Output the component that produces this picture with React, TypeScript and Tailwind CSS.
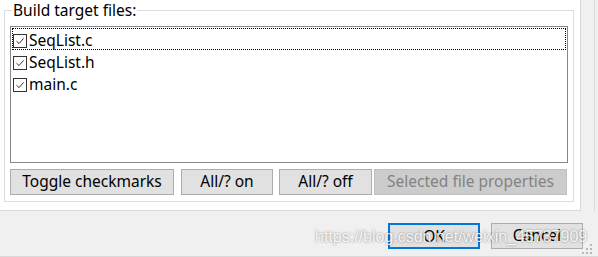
import React from 'react';

const files = ['SeqList.c', 'SeqList.h', 'main.c'];

const Check = () => (
  <span className="w-[14px] h-[14px] border border-[#333] bg-white flex items-center justify-center shrink-0">
    <svg width="10" height="10" viewBox="0 0 10 10">
      <path d="M1.5 5.2 L4 7.6 L8.6 2.4" fill="none" stroke="#333" strokeWidth="1" />
    </svg>
  </span>
);

const App = () => {
  return (
    <div
      className="relative w-[598px] h-[257px] bg-[#f0f0f0] overflow-hidden text-[15.5px] text-black border-b border-[#d9d9d9]"
      style={{ fontFamily: '"Noto Sans", "Open Sans", sans-serif' }}
    >
      <div className="flex h-[211px]">
        <div className="w-[581px] bg-white border-r border-b border-[#d9d9d9] pt-[1px] pl-[4px]">
          <fieldset className="w-[570px] h-[201px] border border-[#dcdcdc] px-[5px]">
            <legend className="ml-[2px] px-[1px] leading-[18px]">Build target files:</legend>
            <div className="mt-[7px] h-[137px] border border-[#828790] p-[1px]">
              {files.map((f, i) => (
                <div
                  key={f}
                  className={`flex items-center gap-[2px] h-[22px] pt-[3px] border ${
                    i === 0 ? 'border-dotted border-black' : 'border-transparent'
                  }`}
                >
                  <Check />
                  <span className="leading-none">{f}</span>
                </div>
              ))}
            </div>
            <div className="flex mt-[6px] h-[26px]">
              <button className="w-[164px] bg-[#e1e1e1] border border-[#adadad]">Toggle checkmarks</button>
              <button className="w-[92px] ml-[7px] bg-[#e1e1e1] border border-[#adadad]">All/? on</button>
              <button className="w-[93px] ml-[6px] bg-[#e1e1e1] border border-[#adadad]">All/? off</button>
              <button className="w-[193px] ml-[2px] bg-[#cccccc] border border-[#bfbfbf] text-[#838383]">
                Selected file properties
              </button>
            </div>
          </fieldset>
        </div>
        <div className="w-[14px] border-r border-[#dadada]" />
      </div>
      <div className="flex justify-end gap-[11px] pr-[15px] pt-[12px]">
        <button className="w-[92px] h-[26px] bg-[#e1e1e1] border-2 border-[#0078d7]">OK</button>
        <button className="w-[92px] h-[26px] bg-[#e1e1e1] border border-[#adadad]">Cancel</button>
      </div>
      <div
        className="absolute left-[315px] top-[227px] text-[16px] leading-[20px] text-white/90 pointer-events-none"
        style={{ fontFamily: '"Liberation Sans", sans-serif', textShadow: '0 0 2px rgba(0,0,0,0.5)' }}
      >
        https://blog.csdn.net/weixin_45737909
      </div>
      <svg className="absolute left-[582px] top-[244px]" width="12" height="12" viewBox="0 0 12 12">
        <g fill="#b8b8b8">
          <rect x="8" y="0" width="2" height="2" />
          <rect x="4" y="4" width="2" height="2" />
          <rect x="8" y="4" width="2" height="2" />
          <rect x="0" y="8" width="2" height="2" />
          <rect x="4" y="8" width="2" height="2" />
          <rect x="8" y="8" width="2" height="2" />
        </g>
      </svg>
    </div>
  );
};

export default App;
